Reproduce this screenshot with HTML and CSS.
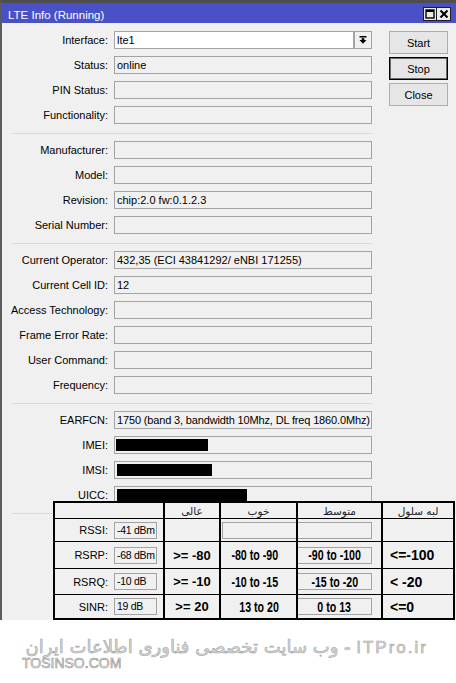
FILE: index.html
```html
<!DOCTYPE html>
<html>
<head>
<meta charset="utf-8">
<link rel="stylesheet" href="styles.css">
</head>
<body>
<div class="screen">
  <div class="window">
    <div class="titlebar">
      <span class="title">LTE Info (Running)</span>
      <div class="tb-btns">
        <span class="tb-btn"><svg width="10" height="10" viewBox="0 0 10 10"><rect x="1" y="1" width="8" height="8" fill="none" stroke="#000" stroke-width="1.4"/><rect x="1" y="1" width="8" height="2" fill="#000"/></svg></span>
        <span class="tb-btn"><svg width="10" height="10" viewBox="0 0 10 10"><path d="M1.5 1.5 L8.5 8.5 M8.5 1.5 L1.5 8.5" stroke="#000" stroke-width="2"/></svg></span>
      </div>
    </div>
    <div class="content">
      <div class="form">
        <div class="row"><span class="lbl">Interface:</span><span class="field white combo">lte1</span><span class="dd"><svg width="8" height="8" viewBox="0 0 8 8"><rect x="0.5" y="0" width="7" height="1.5" fill="#000"/><rect x="2.7" y="2.2" width="2.6" height="2" fill="#000"/><polygon points="0.5,4 7.5,4 4,7.8" fill="#000"/></svg></span></div>
        <div class="row"><span class="lbl">Status:</span><span class="field">online</span></div>
        <div class="row"><span class="lbl">PIN Status:</span><span class="field"></span></div>
        <div class="row"><span class="lbl">Functionality:</span><span class="field"></span></div>
        <div class="sep"></div>
        <div class="row"><span class="lbl">Manufacturer:</span><span class="field"></span></div>
        <div class="row"><span class="lbl">Model:</span><span class="field"></span></div>
        <div class="row"><span class="lbl">Revision:</span><span class="field">chip:2.0 fw:0.1.2.3</span></div>
        <div class="row"><span class="lbl">Serial Number:</span><span class="field"></span></div>
        <div class="sep"></div>
        <div class="row"><span class="lbl">Current Operator:</span><span class="field">432,35 (ECI 43841292/ eNBI 171255)</span></div>
        <div class="row"><span class="lbl">Current Cell ID:</span><span class="field">12</span></div>
        <div class="row"><span class="lbl">Access Technology:</span><span class="field"></span></div>
        <div class="row"><span class="lbl">Frame Error Rate:</span><span class="field"></span></div>
        <div class="row"><span class="lbl">User Command:</span><span class="field"></span></div>
        <div class="row"><span class="lbl">Frequency:</span><span class="field"></span></div>
        <div class="sep"></div>
        <div class="row"><span class="lbl">EARFCN:</span><span class="field tight">1750 (band 3, bandwidth 10Mhz, DL freq 1860.0Mhz)</span></div>
        <div class="row"><span class="lbl">IMEI:</span><span class="field"><span class="redact r-imei"></span></span></div>
        <div class="row"><span class="lbl">IMSI:</span><span class="field"><span class="redact r-imsi"></span></span></div>
        <div class="row"><span class="lbl">UICC:</span><span class="field"><span class="redact r-uicc"></span></span></div>
        <div class="sep"></div>
      </div>
      <div class="buttons">
        <div class="btn">Start</div>
        <div class="btn focus">Stop</div>
        <div class="btn">Close</div>
      </div>
    </div>
  </div>

  <div class="levels">
    <div class="c c1"></div>
    <div class="c hd" dir="rtl">عالی</div>
    <div class="c hd" dir="rtl">خوب</div>
    <div class="c hd" dir="rtl">متوسط</div>
    <div class="c hd" dir="rtl">لبه سلول</div>

    <div class="c c1"><span class="tl">RSSI:</span><span class="tf">-41 dBm</span></div>
    <div class="c c2"></div>
    <div class="c c3"><span class="box3"></span></div>
    <div class="c c4"><span class="box4"></span></div>
    <div class="c c5"></div>

    <div class="c c1"><span class="tl">RSRP:</span><span class="tf">-68 dBm</span></div>
    <div class="c c2"><span class="vb">&gt;= -80</span></div>
    <div class="c c3"><span class="vn">-80 to -90</span></div>
    <div class="c c4"><span class="box4"><span class="vn">-90 to -100</span></span></div>
    <div class="c c5"><span class="vb big">&lt;=-100</span></div>

    <div class="c c1"><span class="tl">RSRQ:</span><span class="tf">-10 dB</span></div>
    <div class="c c2"><span class="vb">&gt;= -10</span></div>
    <div class="c c3"><span class="vn">-10 to -15</span></div>
    <div class="c c4"><span class="box4"><span class="vn">-15 to -20</span></span></div>
    <div class="c c5"><span class="vb big">&lt; -20</span></div>

    <div class="c c1"><span class="tl">SINR:</span><span class="tf">19 dB</span></div>
    <div class="c c2"><span class="vb">&gt;= 20</span></div>
    <div class="c c3"><span class="vn">13 to 20</span></div>
    <div class="c c4"><span class="box4"><span class="vn">0 to 13</span></span></div>
    <div class="c c5"><span class="vb big">&lt;=0</span></div>
  </div>

  <div class="wm">
    <div class="wm-line" dir="rtl"><span class="wm-latin">ITPro.ir</span> - وب سایت تخصصی فناوری اطلاعات ایران</div>
    <div class="wm-site">TOSINSO.COM</div>
  </div>
</div>
</body>
</html>
```

FILE: styles.css
```css
html, body {
  margin: 0;
  padding: 0;
  background: #ffffff;
}

body {
  font-family: "Liberation Sans", Arial, sans-serif;
  font-size: 11px;
  color: #000;
}

.screen {
  position: relative;
  width: 456px;
  height: 683px;
  overflow: hidden;
}

.window {
  height: 620px;
  box-sizing: border-box;
  border-top: 3px solid #4e4e4e;
  border-left: 2px solid #5c5c5c;
  background: #f0f0f0;
}

.titlebar {
  height: 20px;
  background: #4a51c7;
  display: flex;
  align-items: center;
  justify-content: space-between;
}

.title {
  color: #fff;
  padding-left: 6px;
  padding-top: 3px;
  font-size: 11.5px;
}

.tb-btns {
  display: flex;
  margin-right: 5px;
  margin-top: 2px;
}

.tb-btn {
  width: 14px;
  height: 14px;
  box-sizing: border-box;
  border: 1px solid #1e1e1e;
  background: #ececec;
  display: flex;
  align-items: center;
  justify-content: center;
}

.tb-btn + .tb-btn {
  border-left: none;
}

.content {
  display: flex;
  padding-top: 8px;
}

.form {
  width: 370px;
  display: flex;
  flex-direction: column;
  gap: 7px;
}

.row {
  display: flex;
  align-items: center;
  height: 18px;
}

.lbl {
  width: 106px;
  text-align: right;
  margin-right: 6px;
  white-space: nowrap;
}

.field {
  width: 258px;
  height: 18px;
  box-sizing: border-box;
  border: 1px solid #a3a3a3;
  padding-left: 2px;
  line-height: 16px;
  white-space: nowrap;
  overflow: hidden;
  display: flex;
  align-items: center;
}

.field.tight {
  letter-spacing: -0.15px;
}

.field.white {
  background: #fff;
}

.field.combo {
  width: 240px;
}

.dd {
  width: 18px;
  height: 18px;
  box-sizing: border-box;
  border: 1px solid #a3a3a3;
  background: #f0f0f0;
  display: flex;
  align-items: center;
  justify-content: center;
}

.sep {
  height: 1px;
  background: #d9d9d9;
  margin: 2px 0 0 10px;
  width: 360px;
}

.redact {
  display: block;
  background: #000;
}

.r-imei {
  width: 92px;
  height: 12px;
  margin-left: -1px;
}

.r-imsi {
  width: 95px;
  height: 12px;
}

.r-uicc {
  width: 130px;
  height: 14px;
  margin-top: 1px;
}

.buttons {
  margin-left: 17px;
  display: flex;
  flex-direction: column;
  gap: 3px;
}

.btn {
  width: 59px;
  height: 23px;
  box-sizing: border-box;
  border: 1px solid #adadad;
  background: #e6e6e6;
  display: flex;
  align-items: center;
  justify-content: center;
  font-size: 11px;
}

.btn.focus {
  border: 1px solid #000;
  box-shadow: inset 0 0 0 1px #6a6a6a;
}

/* overlay table */
.levels {
  position: absolute;
  left: 53px;
  top: 501px;
  width: 402px;
  height: 119px;
  box-sizing: border-box;
  padding: 2px;
  background: #000;
  display: grid;
  grid-template-columns: 108px 54px 75px 83px 70px;
  grid-template-rows: 15px 22px 26px 25px 23px;
  gap: 1px 2px;
}

.c {
  background: #f0f0f0;
  display: flex;
  align-items: center;
  justify-content: center;
  overflow: visible;
}

.hd {
  font-family: "DejaVu Sans", sans-serif;
  font-size: 10.5px;
  color: #222;
}

.c1 {
  justify-content: flex-end;
  padding-right: 6px;
}

.tl {
  margin-right: 6px;
}

.tf {
  width: 43px;
  height: 17px;
  box-sizing: border-box;
  border: 1px solid #a3a3a3;
  padding-left: 2px;
  line-height: 15px;
  font-size: 10.5px;
  letter-spacing: -0.3px;
  white-space: nowrap;
  overflow: hidden;
}

.c4 {
  justify-content: flex-start;
}

.c3 {
  justify-content: flex-end;
}

.c3 .vn {
  margin-right: 11px;
}

.c5 {
  justify-content: flex-start;
  padding-left: 7px;
}

.box3 {
  width: 74px;
  height: 17px;
  box-sizing: border-box;
  border: 1px solid #a3a3a3;
  border-right: none;
}

.box4 {
  width: 74px;
  height: 17px;
  box-sizing: border-box;
  border: 1px solid #a3a3a3;
  border-left: none;
  display: flex;
  align-items: center;
  justify-content: center;
}

.vb {
  font-weight: bold;
  font-size: 13px;
  white-space: nowrap;
}

.vb.big {
  font-size: 14px;
}

.vn {
  display: inline-block;
  font-weight: bold;
  font-size: 14px;
  white-space: nowrap;
  transform: scaleX(0.76);
}

/* watermark */
.wm {
  height: 63px;
}

.wm-line {
  margin-top: 16px;
  padding-right: 28px;
  font-family: "DejaVu Sans", sans-serif;
  font-size: 18px;
  line-height: 22px;
  color: #dadada;
  -webkit-text-stroke: 0.6px #a4a4a4;
  white-space: nowrap;
}

.wm-latin {
  font-family: "Liberation Sans", Arial, sans-serif;
  font-size: 17px;
  letter-spacing: 2px;
}

.wm-site {
  margin: -3px 0 0 22px;
  font-size: 14px;
  line-height: 14px;
  color: #f4f4f4;
  -webkit-text-stroke: 0.6px #8f8f8f;
}
```
